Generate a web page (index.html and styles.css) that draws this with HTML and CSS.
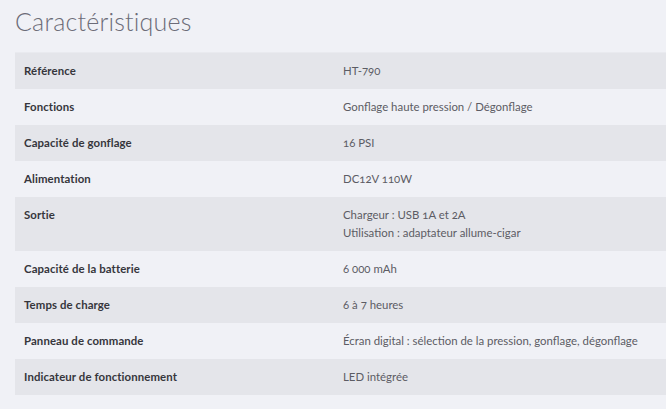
FILE: index.html
```html
<!DOCTYPE html>
<html lang="fr">
<head>
<meta charset="utf-8">
<link rel="stylesheet" href="styles.css">
</head>
<body>
<div class="page">
  <h2 class="title">Caractéristiques</h2>
  <table class="specs">
    <tbody>
      <tr><th>Référence</th><td>HT-790</td></tr>
      <tr><th>Fonctions</th><td>Gonflage haute pression / Dégonflage</td></tr>
      <tr><th>Capacité de gonflage</th><td>16 PSI</td></tr>
      <tr><th>Alimentation</th><td>DC12V 110W</td></tr>
      <tr><th>Sortie</th><td>Chargeur : USB 1A et 2A<br>Utilisation : adaptateur allume-cigar</td></tr>
      <tr><th>Capacité de la batterie</th><td>6 000 mAh</td></tr>
      <tr><th>Temps de charge</th><td>6 à 7 heures</td></tr>
      <tr><th>Panneau de commande</th><td>Écran digital : sélection de la pression, gonflage, dégonflage</td></tr>
      <tr><th>Indicateur de fonctionnement</th><td>LED intégrée</td></tr>
    </tbody>
  </table>
</div>
</body>
</html>
```

FILE: styles.css
```css
html, body {
  margin: 0;
  padding: 0;
  background: #f0f1f6;
}
body {
  font-family: "Lato", "Open Sans", sans-serif;
  font-variant-numeric: oldstyle-nums;
  overflow: hidden;
}
.page {
  padding: 5px 0 0 15px;
}
.title {
  margin: 0 0 15px 0;
  font-size: 25px;
  line-height: 32px;
  font-weight: 300;
  color: #6c6c78;
  letter-spacing: 0.2px;
}
.specs {
  width: 100%;
  border-collapse: collapse;
  font-size: 11.4px;
  line-height: 18px;
  border-top: 1px solid #e9eaef;
}
.specs th, .specs td {
  text-align: left;
  vertical-align: top;
  padding: 9px 9px;
}
.specs th {
  width: 301px;
  font-weight: 700;
  color: #36363c;
  letter-spacing: 0.1px;
}
.specs td {
  color: #5c5c64;
  font-weight: 400;
}
.specs tr:nth-child(odd) {
  background: #e4e5ea;
}
.specs tr:nth-child(even) {
  background: #f0f1f6;
}
```
